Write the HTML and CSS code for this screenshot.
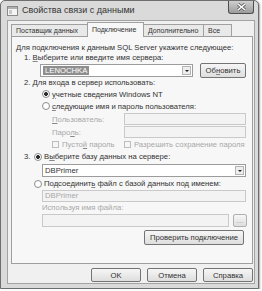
FILE: index.html
```html
<!DOCTYPE html>
<html lang="ru">
<head>
	<meta charset="utf-8">
	<title>Свойства связи с данными</title>
	<link rel="stylesheet" href="styles.css">
</head>
<body>

	<div class="window">
		<div class="titlebar">
			<svg class="app-icon" width="11" height="10" viewBox="0 0 11 10">
				<rect x="0.5" y="0.5" width="10" height="9" fill="#f4f4f4" stroke="#8a8a8a"/>
				<rect x="1" y="1" width="9" height="2" fill="#b0b0b0"/>
				<rect x="2" y="4" width="3" height="4" fill="#c8c8c8"/>
			</svg>
			<span class="title">Свойства связи с данными</span>
			<div class="close">
				<svg width="11" height="8" viewBox="0 0 11 8">
					<path d="M2 1 L9 7 M9 1 L2 7" stroke="#5a5a5a" stroke-width="3"/>
					<path d="M2 1 L9 7 M9 1 L2 7" stroke="#fff" stroke-width="1.6"/>
				</svg>
			</div>
		</div>

		<div class="client">
			<div class="tabs">
				<div class="tab tab-provider">Поставщик данных</div>
				<div class="tab tab-connect active">Подключение</div>
				<div class="tab tab-extra">Дополнительно</div>
				<div class="tab tab-all">Все</div>
			</div>

			<div class="panel">
				<div class="line">Для подключения к данным SQL Server укажите следующее:</div>
				<div class="line step">1. <u>В</u>ыберите или введите имя сервера:</div>
				<div class="row server-row">
					<div class="combo server-combo">
						<span class="combo-text"><span class="selected">LENOCHKA</span></span>
						<span class="combo-arrow"></span>
					</div>
					<button class="btn refresh">Об<u>н</u>овить</button>
				</div>

				<div class="line step login">2. Для входа в сервер использовать:</div>
				<div class="row option">
					<span class="radio checked"></span>
					<span><u>у</u>четные сведения Windows NT</span>
				</div>
				<div class="row option">
					<span class="radio"></span>
					<span><u>с</u>ледующие имя и пароль пользователя:</span>
				</div>
				<div class="row cred">
					<span class="cred-label disabled"><u>П</u>ользователь:</span>
					<span class="field cred-field off"></span>
				</div>
				<div class="row cred">
					<span class="cred-label disabled">Паро<u>л</u>ь:</span>
					<span class="field cred-field off"></span>
				</div>
				<div class="row checks">
					<span class="check-item disabled"><span class="checkbox"></span><span>Пусто<u>й</u> пароль</span></span>
					<span class="check-item disabled second"><span class="checkbox"></span><span>Разрешить сохранение пароля</span></span>
				</div>

				<div class="row step3">
					<span class="num">3.</span>
					<span class="radio checked"></span>
					<span>В<u>ы</u>берите базу данных на сервере:</span>
				</div>
				<div class="row">
					<div class="combo db-combo">
						<span class="combo-text">DBPrimer</span>
						<span class="combo-arrow"></span>
					</div>
				</div>
				<div class="row attach">
					<span class="radio"></span>
					<span>Подсоединит<u>ь</u> файл с базой данных под именем:</span>
				</div>
				<div class="row">
					<span class="field wide off">DBPrimer</span>
				</div>
				<div class="line sub disabled">Используя имя файла:</div>
				<div class="row file-row">
					<span class="field file-field off"></span>
					<button class="btn browse">...</button>
				</div>
				<div class="row test-row">
					<button class="btn test">Проверить подключение</button>
				</div>
			</div>

			<div class="actions">
				<button class="btn">OK</button>
				<button class="btn">Отмена</button>
				<button class="btn">Справка</button>
			</div>
		</div>
	</div>

</body>
</html>
```

FILE: styles.css
```css
body {
	margin: 0;
	background: #ffffff;
	font-family: "Liberation Sans", Arial, sans-serif;
	font-size: 7.7px;
	color: #333333;
}

u {
	text-decoration: underline;
	text-decoration-color: #888888;
}

.window {
	width: 259px;
	height: 289px;
	box-sizing: border-box;
	display: flex;
	flex-direction: column;
	padding: 0 3px 4px 6px;
	border: 1px solid #6e6e6e;
	border-radius: 5px 5px 0 0;
	background: #dadada;
	box-shadow: 1px 1px 2px rgba(0, 0, 0, 0.35);
}

/* title bar */

.titlebar {
	display: flex;
	align-items: flex-start;
	height: 19px;
}

.app-icon {
	margin: 5px 0 0 0;
}

.title {
	margin: 4px 0 0 4px;
	font-size: 9px;
	color: #333333;
}

.close {
	display: flex;
	align-items: center;
	justify-content: center;
	margin-left: auto;
	margin-right: 1px;
	width: 26px;
	height: 13px;
	box-sizing: border-box;
	border: 1px solid #4e4e4e;
	border-top: none;
	border-radius: 0 0 3px 3px;
	background: linear-gradient(#cfcfcf, #9c9c9c);
}

/* client area */

.client {
	flex: 1;
	display: flex;
	flex-direction: column;
	border: 1px solid #a3a3a3;
	background: #f0f0f0;
}

.tabs {
	display: flex;
	align-items: flex-end;
	height: 15px;
	padding-left: 3px;
}

.tab {
	box-sizing: border-box;
	height: 12px;
	line-height: 11px;
	padding-left: 4px;
	margin-right: -1px;
	border: 1px solid #a0a0a0;
	border-bottom: none;
	background: #e9e9e9;
	font-size: 7px;
	white-space: nowrap;
	overflow: hidden;
}

.tab.active {
	position: relative;
	z-index: 1;
	height: 15px;
	line-height: 13px;
	margin-bottom: -1px;
	background: #f7f7f7;
}

.tab-provider { width: 77px; }
.tab-connect { width: 57px; }
.tab-extra { width: 61px; }
.tab-all { width: 29px; }

.panel {
	box-sizing: border-box;
	height: 228px;
	margin: 0 1px 0 3px;
	padding: 5px 5px 0 4px;
	border: 1px solid #9f9f9f;
	background: #f7f7f7;
}

.line {
	height: 11px;
	line-height: 11px;
	white-space: nowrap;
}

.step {
	margin-left: 8px;
	height: 10px;
	line-height: 10px;
}

.disabled {
	color: #a8a8a8;
}

.row {
	display: flex;
	align-items: center;
	white-space: nowrap;
}

.server-row {
	height: 15px;
	margin-left: 24px;
}

.login {
	height: 10px;
	line-height: 10px;
}

.option {
	height: 12px;
	margin-left: 26px;
}

.radio {
	box-sizing: border-box;
	width: 8px;
	height: 8px;
	margin-right: 2px;
	border: 1px solid #8c8c8c;
	border-radius: 50%;
	background: #ffffff;
	flex: none;
}

.radio.checked {
	background: radial-gradient(circle, #2e2e2e 0 1.6px, #ffffff 2.2px);
}

.cred {
	height: 12px;
	margin: 1px 0 0 36px;
}

.cred-label {
	width: 72px;
}

.field {
	box-sizing: border-box;
	height: 12px;
	line-height: 10px;
	padding-left: 2px;
	border: 1px solid #a8a8a8;
	background: #ffffff;
}

.field.off {
	border-color: #c9c9c9;
	background: #f3f3f3;
	color: #a8a8a8;
}

.cred-field {
	width: 122px;
}

.checks {
	height: 12px;
	margin-left: 36px;
}

.check-item {
	display: flex;
	align-items: center;
	width: 72px;
}

.check-item.second {
	width: auto;
}

.checkbox {
	box-sizing: border-box;
	width: 7px;
	height: 7px;
	margin-right: 3px;
	border: 1px solid #bdbdbd;
	background: #f6f6f6;
}

.step3 {
	height: 13px;
	margin-left: 8px;
}

.num {
	width: 10px;
}

.combo {
	box-sizing: border-box;
	display: flex;
	align-items: center;
	height: 13px;
	padding: 0 1px 0 2px;
	border: 1px solid #9c9c9c;
	background: #ffffff;
}

.combo-text {
	flex: 1;
}

.selected {
	padding: 0 2px;
	background: #8e8e8e;
	color: #ffffff;
}

.combo-arrow {
	box-sizing: border-box;
	width: 9px;
	height: 9px;
	border: 1px solid #b4b4b4;
	background: #eeeeee;
	position: relative;
}

.combo-arrow::after {
	content: "";
	position: absolute;
	left: 2px;
	top: 3px;
	border-left: 2px solid transparent;
	border-right: 2px solid transparent;
	border-top: 2px solid #1e1e1e;
}

.server-combo {
	width: 153px;
}

.db-combo {
	width: 204px;
	margin: 1px 0 0 26px;
}

.attach {
	height: 13px;
	margin-left: 18px;
}

.wide {
	width: 204px;
	margin-left: 26px;
}

.sub {
	margin-left: 26px;
}

.file-row {
	margin: 1px 0 0 26px;
	height: 13px;
}

.file-field {
	width: 187px;
	height: 13px;
}

/* buttons */

.btn {
	box-sizing: border-box;
	height: 14px;
	padding: 0;
	font: inherit;
	color: #333333;
	border: 1px solid #747474;
	border-radius: 2px;
	background: linear-gradient(#f6f6f6, #dedede);
}

.refresh {
	width: 46px;
	height: 15px;
	margin-left: 7px;
}

.browse {
	width: 14px;
	height: 13px;
	margin-left: 4px;
	line-height: 6px;
	color: #9a9a9a;
	border-color: #b0b0b0;
}

.test-row {
	justify-content: flex-end;
	margin-top: 3px;
	padding-right: 3px;
}

.test {
	width: 100px;
	height: 15px;
}

.actions {
	display: flex;
	justify-content: flex-end;
	gap: 6px;
	padding: 4px 1px 0 0;
}

.actions .btn {
	width: 50px;
}
```
